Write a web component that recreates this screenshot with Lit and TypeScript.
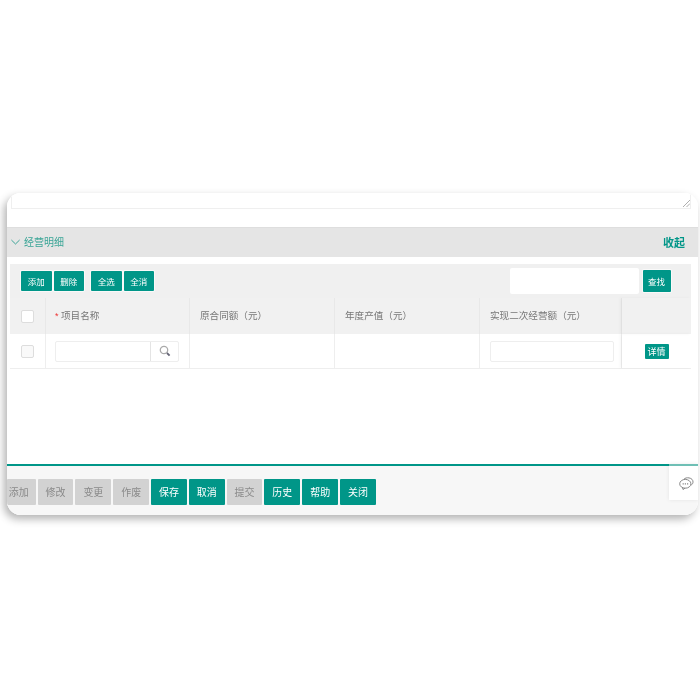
import { LitElement, html, css } from "lit";
import { customElement } from "lit/decorators.js";

@customElement("app-root")
export class AppRoot extends LitElement {
  static styles = css`
    :host {
      display: block;
      height: 700px;
      box-sizing: border-box;
      padding: 193px 2px 0 7px;
      background: #fff;
      font-family: "Liberation Sans", "Noto Sans CJK SC", sans-serif;
      color: #666;
    }
    * { box-sizing: border-box; }
    .shadow {
      border-radius: 14px;
      box-shadow: -3px 4px 8px rgba(0, 0, 0, 0.3);
      filter: blur(0.35px);
    }
    .card {
      position: relative;
      height: 322px;
      background: #fff;
      border-radius: 14px;
      overflow: hidden;
      display: flex;
      flex-direction: column;
    }
    .top { height: 34px; padding: 0 7px 0 4px; flex: none; }
    .textarea {
      position: relative;
      height: 16px;
      border: 1px solid #efefef;
      border-top: 0;
      background: #fff;
    }
    .grip {
      position: absolute;
      right: 0;
      bottom: 1px;
      width: 7px;
      height: 7px;
      display: block;
    }
    .section {
      flex: none;
      height: 30px;
      background: #e5e5e5;
      border-top: 1px solid #dedede;
      display: flex;
      align-items: center;
      padding: 0 13px 2px 4px;
      font-size: 10px;
    }
    .section svg { width: 9px; height: 6px; margin-right: 4px; }
    .section .title { flex: 1; color: #3aa596; }
    .section .fold { color: #009688; font-size: 11px; font-weight: 700; }
    .panel {
      flex: none;
      margin: 7px 7px 0 3px;
      background: #f0f0f0;
    }
    .toolbar {
      height: 34px;
      display: flex;
      align-items: center;
      gap: 2px;
      padding: 0 20.5px 0 11px;
    }
    .btn {
      background: #009688;
      color: #fff;
      border-radius: 1px;
      box-shadow: 0 0 0 1px rgba(255, 255, 255, 0.6);
      font-size: 8.5px;
      display: flex;
      align-items: center;
      justify-content: center;
      height: 20.5px;
      width: 30.5px;
    }
    .toolbar .sep { width: 3px; }
    .toolbar .find { width: 28px; height: 21.5px; margin-left: 1.5px; }
    .spacer { flex: 1; }
    .search {
      width: 129px;
      height: 26px;
      background: #fff;
      border-radius: 2px;
    }
    .row {
      display: grid;
      grid-template-columns: 36px 144px 145px 145px 142px 69px;
    }
    .head { height: 36px; background: #f1f1f1; font-size: 9.6px; color: #777; }
    .head .t { position: relative; top: -1px; }
    .body { height: 35px; background: #fff; border-bottom: 1px solid #eee; }
    .cell {
      display: flex;
      align-items: center;
      border-right: 1px solid #e8e8e8;
      padding-left: 10px;
    }
    .body .cell { border-right-color: #eee; }
    .cell.name { padding-left: 9px; }
    .cell.check { justify-content: center; padding: 0; }
    .cell.last { border-right: 0; justify-content: center; padding: 0; box-shadow: -2px 0 3px rgba(0,0,0,0.04); }
    .box {
      width: 13px;
      height: 13px;
      background: #fff;
      border: 1px solid #ddd;
      border-radius: 2px;
    }
    .body .box { background: #f9f9f9; }
    .req { color: #e33; font-size: 9px; margin-right: 1px; width: 5px; }
    .lookup {
      width: 124px;
      height: 21px;
      background: #fff;
      border: 1px solid #eee;
      border-radius: 2px;
      display: flex;
      justify-content: flex-end;
      align-items: center;
    }
    .lookup .icon {
      width: 28px;
      height: 19px;
      border-left: 1px solid #e4e4e4;
      display: flex;
      align-items: center;
      justify-content: center;
    }
    .input {
      width: 124px;
      height: 21px;
      background: #fff;
      border: 1px solid #eee;
      border-radius: 2px;
    }
    .detail {
      background: #009688;
      color: #fff;
      font-size: 9px;
      border-radius: 1px;
      width: 24px;
      height: 15px;
      display: flex;
      align-items: center;
      justify-content: center;
    }
    .blank { flex: 1; background: #fff; }
    .footer {
      flex: none;
      height: 51px;
      background: #f7f7f7;
      border-top: 2px solid #009688;
      padding: 13px 0 0 0;
      display: flex;
      gap: 2px;
    }
    .fbtn {
      width: 35.8px;
      height: 26px;
      border-radius: 1px;
      font-size: 10px;
      padding-bottom: 1px;
      display: flex;
      align-items: center;
      justify-content: center;
      color: #fff;
      background: #009688;
    }
    .fbtn.off { background: #d2d2d2; color: #8a8a8a; }
    .fbtn.first { width: 28.7px; justify-content: flex-end; padding-right: 7px; white-space: nowrap; }
    .float {
      position: absolute;
      right: 0;
      top: 271px;
      width: 29px;
      height: 36px;
      background: #fff;
      border-top: 2px solid #6fbfb5;
      box-shadow: 0 0 4px rgba(0, 0, 0, 0.08);
      display: flex;
      align-items: center;
      justify-content: center;
      padding-left: 5px;
    }
  `;

  render() {
    const lens = html`<svg width="12" height="12" viewBox="0 0 12 12" fill="none">
      <circle cx="5" cy="5" r="3.7" stroke="#aaa" stroke-width="1.3" />
      <path d="M8 8l2.6 2.6" stroke="#667" stroke-width="1.8" />
    </svg>`;
    return html`
      <div class="shadow">
        <div class="card">
          <div class="top">
            <div class="textarea">
              <svg class="grip" viewBox="0 0 7 7" stroke="#999" stroke-width="0.8">
                <path d="M0 7L7 0M3.5 7L7 3.5" />
              </svg>
            </div>
          </div>
          <div class="section">
            <svg viewBox="0 0 9 6" fill="none" stroke="#2a9d8f" stroke-width="0.9"><path d="M.4 1L4.5 5 8.6 1" /></svg>
            <span class="title">经营明细</span>
            <span class="fold">收起</span>
          </div>
          <div class="panel">
            <div class="toolbar">
              <div class="btn">添加</div>
              <div class="btn">删除</div>
              <div class="sep"></div>
              <div class="btn">全选</div>
              <div class="btn">全消</div>
              <div class="spacer"></div>
              <div class="search"></div>
              <div class="btn find">查找</div>
            </div>
            <div class="row head">
              <div class="cell check"><div class="box"></div></div>
              <div class="cell name"><span class="req">*</span><span class="t">项目名称</span></div>
              <div class="cell"><span class="t">原合同额（元）</span></div>
              <div class="cell"><span class="t">年度产值（元）</span></div>
              <div class="cell"><span class="t">实现二次经营额（元）</span></div>
              <div class="cell last"></div>
            </div>
            <div class="row body">
              <div class="cell check"><div class="box"></div></div>
              <div class="cell name"><div class="lookup"><div class="icon">${lens}</div></div></div>
              <div class="cell"></div>
              <div class="cell"></div>
              <div class="cell"><div class="input"></div></div>
              <div class="cell last"><div class="detail">详情</div></div>
            </div>
          </div>
          <div class="blank"></div>
          <div class="footer">
            <div class="fbtn off first">添加</div>
            <div class="fbtn off">修改</div>
            <div class="fbtn off">变更</div>
            <div class="fbtn off">作废</div>
            <div class="fbtn">保存</div>
            <div class="fbtn">取消</div>
            <div class="fbtn off">提交</div>
            <div class="fbtn">历史</div>
            <div class="fbtn">帮助</div>
            <div class="fbtn">关闭</div>
          </div>
          <div class="float">
            <svg width="15" height="13" viewBox="0 0 15 13" fill="none" stroke="#888" stroke-width="1">
              <path d="M5 2.2C6 1 8 .5 10 .9c2.6.4 4.2 2.2 4 4.3-.1 1.2-.8 2.2-1.8 2.9" />
              <ellipse cx="6.3" cy="6.8" rx="5.6" ry="4.4" />
              <path d="M3.5 10.6l.5 1.9 2.2-1.4" />
              <path d="M3.6 6.8h1.2M5.8 6.8h1.2M8 6.8h1.2" stroke-width="1.2" />
            </svg>
          </div>
        </div>
      </div>
    `;
  }
}
